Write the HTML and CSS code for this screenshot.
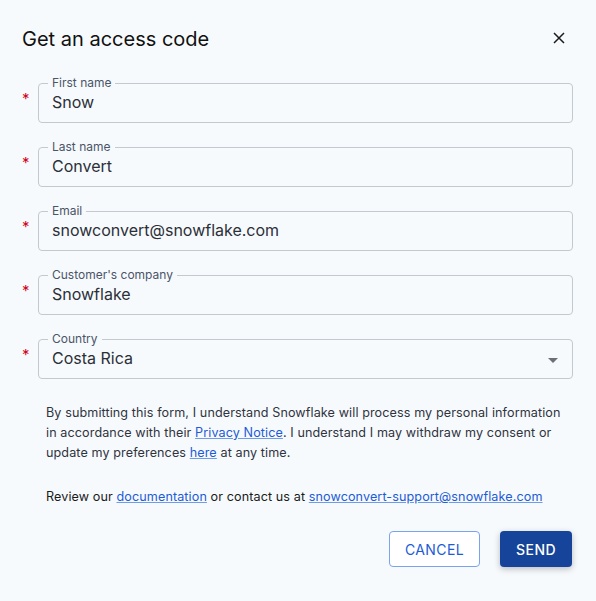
FILE: index.html
```html
<!DOCTYPE html>
<html>
<head>
  <meta charset="UTF-8" />
  <title>Get an access code</title>
  <link rel="stylesheet" href="styles.css">
</head>
<body>
  <div class="dialog">
    <div class="dialog-header">
      <h2>Get an access code</h2>
      <button class="close" aria-label="Close">
        <svg width="12" height="12" viewBox="0 0 12 12"><path d="M1 1 L11 11 M11 1 L1 11" stroke="#1b1b1b" stroke-width="1.5" fill="none"/></svg>
      </button>
    </div>

    <div class="fields">
      <div class="row">
        <span class="req">*</span>
        <div class="field">
          <label>First name</label>
          <div class="value">Snow</div>
        </div>
      </div>
      <div class="row">
        <span class="req">*</span>
        <div class="field">
          <label>Last name</label>
          <div class="value">Convert</div>
        </div>
      </div>
      <div class="row">
        <span class="req">*</span>
        <div class="field">
          <label>Email</label>
          <div class="value">snowconvert@snowflake.com</div>
        </div>
      </div>
      <div class="row">
        <span class="req">*</span>
        <div class="field">
          <label>Customer's company</label>
          <div class="value">Snowflake</div>
        </div>
      </div>
      <div class="row">
        <span class="req">*</span>
        <div class="field select">
          <label>Country</label>
          <div class="value">Costa Rica</div>
          <svg class="caret" width="10" height="5" viewBox="0 0 10 5"><path d="M0 0 L10 0 L5 5 Z" fill="#6b6f76"/></svg>
        </div>
      </div>
    </div>

    <p class="notice">
      By submitting this form, I understand Snowflake will process my personal information
      in accordance with their <a href="#">Privacy Notice</a>. I understand I may withdraw my consent or
      update my preferences <a href="#">here</a> at any time.
    </p>

    <p class="contact">
      Review our <a href="#">documentation</a> or contact us at <a href="#">snowconvert-support@snowflake.com</a>
    </p>

    <div class="actions">
      <button class="btn outline">CANCEL</button>
      <button class="btn primary">SEND</button>
    </div>
  </div>
</body>
</html>
```

FILE: styles.css
```css
body {
  margin: 0;
  padding: 0;
  background: #f7fafd;
  font-family: Inter, "Noto Sans", sans-serif;
  color: #1b1b1b;
}
.dialog {
  width: 596px;
  height: 601px;
  box-sizing: border-box;
  padding: 26px 23px 0 22px;
}
.dialog-header {
  display: flex;
  justify-content: space-between;
  align-items: center;
  height: 26px;
}
.dialog-header h2 {
  margin: 0;
  font-size: 20px;
  font-weight: 400;
  color: #111;
}
.close {
  background: none;
  border: none;
  padding: 0;
  width: 24px;
  height: 24px;
  display: flex;
  align-items: center;
  justify-content: center;
  margin: -2px 2px 0 0;
  cursor: pointer;
}
.fields {
  margin-top: 31px;
  display: flex;
  flex-direction: column;
  gap: 24px;
}
.row {
  display: flex;
  align-items: center;
}
.req {
  width: 16px;
  color: #d0021b;
  font-size: 15px;
  line-height: 1;
  margin-top: -10px;
}
.field {
  flex: 1;
  border: 1px solid #c4c8cf;
  border-radius: 4px;
  padding: 0 13px;
  height: 40px;
  box-sizing: border-box;
  display: flex;
  align-items: center;
  position: relative;
}
.field label {
  position: absolute;
  top: -9px;
  left: 9px;
  padding: 0 4px;
  font-size: 12px;
  line-height: 16px;
  color: #4a5568;
  background: #f7fafd;
}
.value {
  font-size: 16px;
  line-height: 20px;
  color: #2b3038;
  margin-top: -3px;
}
.select .caret {
  position: absolute;
  right: 14px;
  top: 18px;
}
.notice {
  margin: 24px 0 0 24px;
  font-size: 12.6px;
  line-height: 20px;
  color: #2f3440;
  letter-spacing: 0.1px;
}
.contact {
  margin: 24px 0 0 24px;
  font-size: 12.6px;
  line-height: 20px;
  color: #1b1b1b;
  letter-spacing: 0.1px;
}
a {
  color: #1d5cd6;
  text-decoration-color: #6f9be8;
}
.actions {
  display: flex;
  justify-content: flex-end;
  gap: 20px;
  margin-top: 24px;
}
.btn {
  height: 36px;
  font-family: Inter, "Noto Sans", sans-serif;
  font-size: 14px;
  letter-spacing: 0.4px;
  border-radius: 4px;
  cursor: pointer;
}
.outline {
  width: 91px;
  background: #fff;
  color: #1d5cd6;
  border: 1px solid #7aa2ee;
}
.primary {
  width: 72px;
  margin-right: 1px;
  background: #15449a;
  color: #fff;
  border: none;
  font-weight: 500;
  box-shadow: 0 2px 6px rgba(0,0,0,0.25);
}
```
